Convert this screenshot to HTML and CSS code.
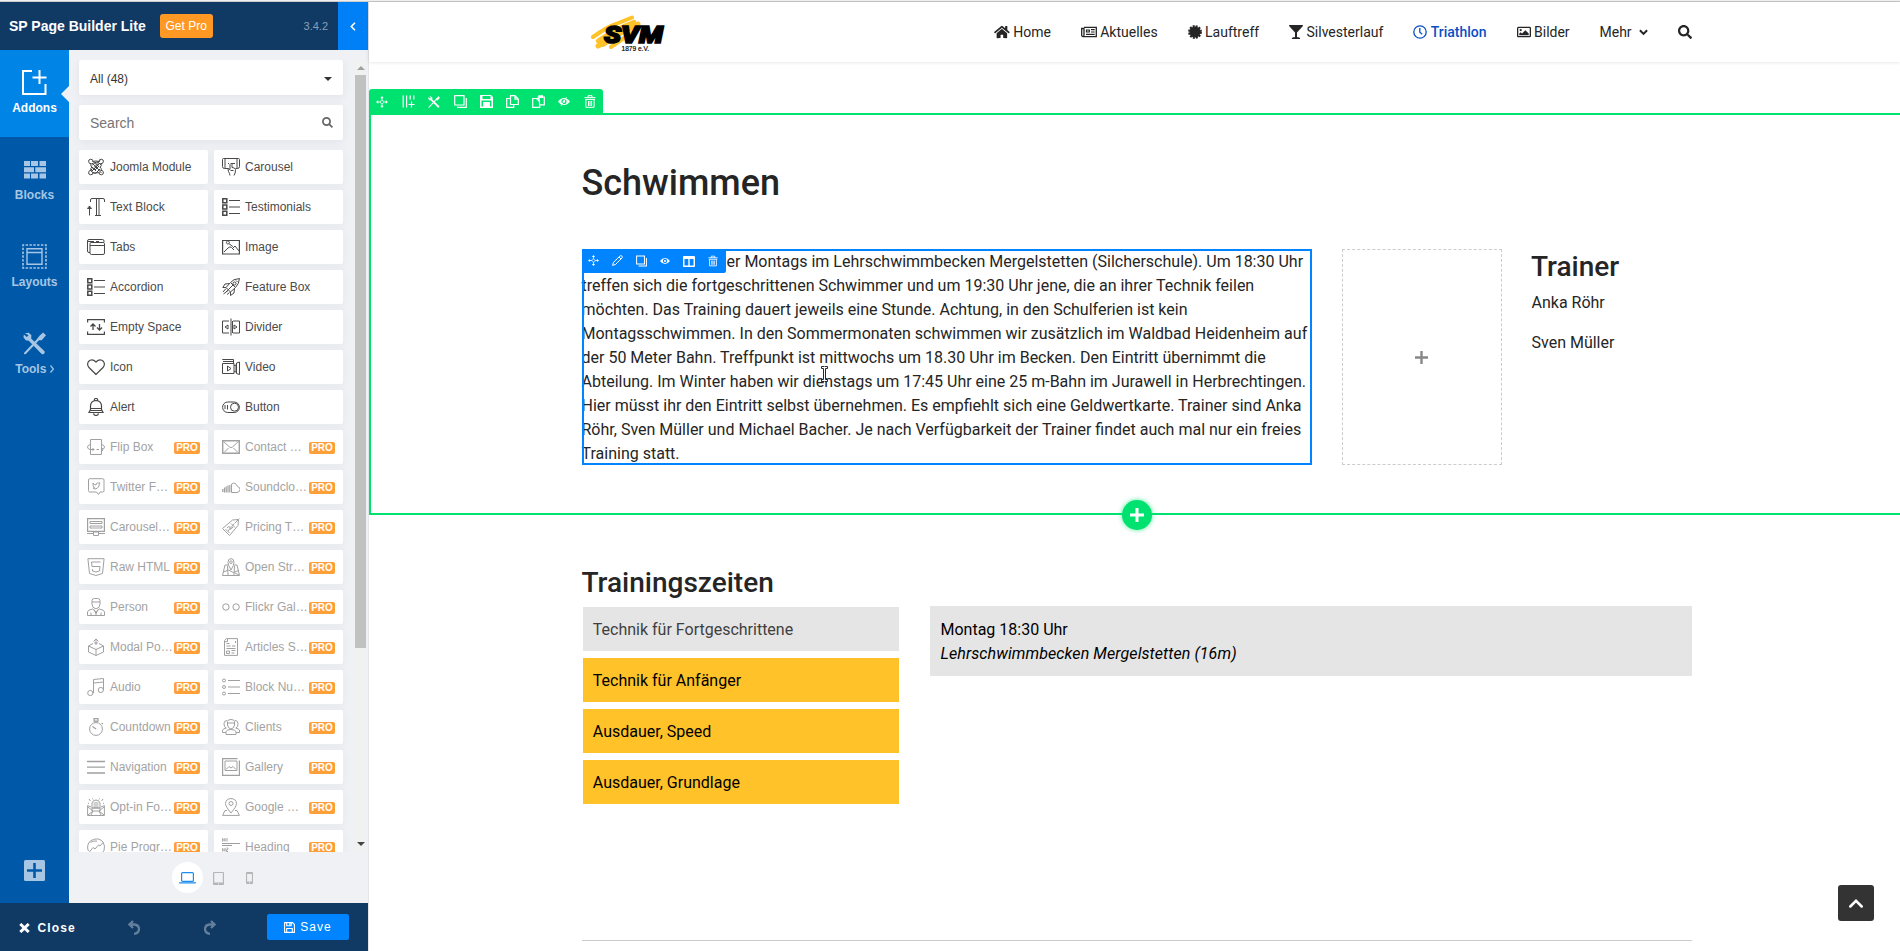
FILE: index.html
```html
<!DOCTYPE html>
<html lang="de">
<head>
<meta charset="utf-8">
<title>SP Page Builder Lite</title>
<link rel="stylesheet" href="styles.css">
</head>
<body>
<svg class="sprite" width="0" height="0">
  <symbol id="joomla" viewBox="0 0 18 18"><path d="M5 7.500 8 4.500Q10 3 12.500 5.500L14 7M5 5l7.500 7.500M10.500 5l2.500-2.500M13 11l-4 4q-1.500 1-3-.5L4 13M5 13l8-8M5.500 10.500 3 13M12 12.500l2.500 2.500M7 3.500 11 7.500M7 9.500l4-4M8 12l4-4M5 9l4 4"/><path d="M4.500 5.500a2.200 2.200 0 1 1 1.500-2l3 3M13.500 5.500a2.200 2.200 0 1 0-1.500-2M4.500 12.500a2.200 2.200 0 1 0 1.500 2M13.500 12.500a2.200 2.200 0 1 1-1.500 2M4 5.500q-1 2 1 4M14 5.500q1 2-1 4M5.500 3.500q3-1 7 0M5.500 14.500q3 1 7 0M4 12.500q-1-2 1-3.500M14 12.500q1-2-1-3.500"/></symbol>
  <symbol id="carousel" viewBox="0 0 18 18"><path d="M6 10.500H2.500Q.5 10.500.5 8.500V1.500Q.5.500 1.500.500h15q1 0 1 1v7q0 2-2 2h-2M3 .500v10M15 .500v10M6 5.500h1M9 5.500h4M8 17.500Q7.500 15 6.500 13.500L6 10.500l2 1V6.500q1-2 2 0v3q3 0 3.500 2 0 4-1.500 6M8.500 12.500h3"/></symbol>
  <symbol id="textblock" viewBox="0 0 18 18"><path d="M3.500 4V2q0-1.500 1.500-1.500h11q1.500 0 1.500 1.500v2M9.500.500V17M12 .500V17M8 17.500h6M2.500 17.500V8M.5 10.500l2-2.500 2 2.500z"/></symbol>
  <symbol id="list" viewBox="0 0 18 18"><path d="M.8.800h4v4h-4zM.8 7h4v4h-4zM.8 13.200h4v4h-4z" stroke-width="1.500"/><path d="M7 2.500h11M7 9h11M7 15.500h11" stroke-width="1.200"/></symbol>
  <symbol id="tabs" viewBox="0 0 18 18"><path d="M3 14.500H2Q.5 14.500.5 13V3Q.5 1.500 2 1.500h13.500q1.500 0 1.500 1.500v1M3 5.500Q3 4.500 4 4.500h12q1.500 0 1.500 1v9.500q0 1.500-1.500 1.500H4.500Q3 16.500 3 15zM3 7.500h14M1 3.500h6M9 3.500h3"/></symbol>
  <symbol id="image" viewBox="0 0 18 18"><path d="M.6 2.500h16.800v13.500H.6z" stroke-width="1.200"/><path d="m2 14 4-4q2-2 3.500-.5L12 12M10.500 10.500l2.500-2.500 4 5M7 5.500a1.500 1.500 0 1 0-.1.100l4 3"/></symbol>
  <symbol id="rocket" viewBox="0 0 18 18"><path d="M17.500.500Q11 1 8.500 4.500L4 9.500l4.500 4.500 5-4.500Q17 6 17.500.500zM7.500 5.500 3 6 .8 9.500 4 9.500M12.500 10.500 12 15l-3.500 2.500V14M11 7l-7 7M9 5l4 4M14 2.500l1.500 1.500M4 10.500 1 14M6 12.500 1.500 16M7.500 14.500 5 16.500"/><circle cx="12.500" cy="5.500" r="1.500"/></symbol>
  <symbol id="space" viewBox="0 0 18 18"><path d="M.6 4.500V1.600h16.800V4.500M.6 13.500v2.900h16.800V13.500" stroke-width="1.200"/><path d="M6 12V6M3.500 8.500 6 6l2.500 2.500M12.500 6v6M10 9.500l2.500 2.500L15 9.500" stroke-width="1.300"/></symbol>
  <symbol id="divider" viewBox="0 0 18 18"><path d="M7 15H.5V3H7M11 3h6.500v12H11M9 .500v17M10.500 3v12M6 7v4L3 9zM12 7v4l3-2z"/></symbol>
  <symbol id="heart" viewBox="0 0 18 18"><path d="M9 16.500 2 9.500Q-.5 6.500 1.500 3.500q3.500-3.500 7.500.5 4-4 7.500-.5Q18.500 6.500 16 9.500z" stroke-width="1.200"/></symbol>
  <symbol id="video" viewBox="0 0 18 18"><path d="M.5 5.500h11.500v10H.5zM1 3.500h10.500M.5 2V1.500h11V5M12 7.500l2-.5v7l-2-.5M14.500 5l3-1v12.500l-3-1zM5.500 8v5l3.500-2.500z"/></symbol>
  <symbol id="bell" viewBox="0 0 18 18"><path d="M2 14.500h14l-1.500-3V8q0-5-5.500-5.500Q3.500 3 3.500 8v3.500zM4 10.500h10M3.500 12.500h11M7.500 2.500Q7 .500 9 .500t1.500 2M6.500 15.500Q7 17.500 9 17.500t2.500-2" stroke-width="1.200"/></symbol>
  <symbol id="toggle" viewBox="0 0 18 18"><rect x=".6" y="4" width="16.800" height="10.500" rx="5.200"/><circle cx="12.500" cy="9.200" r="4"/><path d="M5.500 7v4.500M3 7v4"/></symbol>
  <symbol id="flip" viewBox="0 0 18 18"><path d="M3.500 1.500h11v15h-11zM3 6.500Q.5 7.500.5 9q0 2 2.500 2.500h4M5.500 10 7 11.500 5.500 13M15 6.500q2.500 1 2.500 2.500 0 2-2.500 2.500M9.500 11.500H12M16 10l-1.500 1.500L16 13"/></symbol>
  <symbol id="mail" viewBox="0 0 18 18"><path d="M.7 2.700h16.600v12.600H.7z" stroke-width="1.400"/><path d="m1.500 3.500 6 5.500q1.500 1 3 0l6-5.500M2 14.500l4.500-4.500M16 14.500l-4.500-4.500"/></symbol>
  <symbol id="twitter" viewBox="0 0 18 18"><path d="M2.500.700h13Q17 .700 17 2v11q0 1-1.500 1H13l-1.500 2.500L9.500 14H3q-1.500 0-1.500-1.500V2Q1.500.700 2.500.700z"/><path d="M6 5q1 2 3 2 0-2 1.500-2H13q-1 1-1 3-1.500 3-4 3-1.500 0-2-1h1.500Q5.500 8 6 5z"/></symbol>
  <symbol id="cloud" viewBox="0 0 18 18"><path d="M.8 11v3M2.500 9.500V14.500M4.200 8.500v6M6 7.500v7M7.800 7v7.500" stroke-width="1.200"/><path d="M9.500 14.500V6q4-2.500 6 2.500 2.500.5 2.500 3t-3 3z"/></symbol>
  <symbol id="monitor" viewBox="0 0 18 18"><path d="M.6.600h16.800v12.800H.6zM0 15.500h6M12 15.500h6" stroke-width="1.200"/><path d="M3 3.500h12v2H3zM3 8h12v2H3zM6.500 14h5v3.500h-5z"/></symbol>
  <symbol id="tag" viewBox="0 0 18 18"><path d="M10.500 2 16.500 1.500 16 7.500 7.500 17.500.5 10.500zM12.500 5.500l5-5M5 10q3-3 3 0t3-1M6 13l6-7M9 5.500l4 4M3.500 11l4 4"/></symbol>
  <symbol id="html" viewBox="0 0 18 18"><path d="M.9.700h16.200L15.500 15.500 9 17.500l-6.500-2z"/><path d="M13.500 4h-9l.5 4.500h8l-.5 4.500-3.500 1-3.500-1-.2-2"/></symbol>
  <symbol id="streetmap" viewBox="0 0 18 18"><path d="M6 7H3L.5 17.500h17L15 7h-3M9 12Q6 7 6 4.500 6 .600 9 .600t3 3.900Q12 7 9 12zM1.500 14l5-2 5 2.500 5-2M5.500 8l.5 9M12.500 8l-.5 9M13 15l4 2"/><circle cx="9" cy="4.200" r="1.300"/></symbol>
  <symbol id="person" viewBox="0 0 18 18"><path d="M5 6V2.500Q5 .500 7.500.500h3Q13 .500 13 2.500V6q0 4-4 5-4-1-4-5zM5 4h8M.5 17.500V14q0-2 5-3l3.500 3 3.500-3q5 1 5 3v3.500zM9 14v3.500M4 14.500v3M14 14.500v3M7 11.500l2 4 2-4"/></symbol>
  <symbol id="flickr" viewBox="0 0 18 18"><circle cx="3.900" cy="9" r="3.200"/><circle cx="14.100" cy="9" r="3.200"/></symbol>
  <symbol id="modal" viewBox="0 0 18 18"><path d="M6 5.500 1.500 8v6L9 17.500l7.500-3.500V8L12 5.500M1.500 8 9 11.500 16.500 8M9 11.500v6M9 7V.800M6.500 3.500 9 1l2.500 2.500M7 5h4"/></symbol>
  <symbol id="article" viewBox="0 0 18 18"><path d="M4.500.600H15.500v16.800H2.500V2.500zM5.500.600v3h-3M4.500 5.500h3M4.500 8h4M10 8h3.500M4.500 10.500h9M4.500 13h3v2.500h-3zM9.500 12.500h4M9.500 15h3M13.500 3v2"/></symbol>
  <symbol id="audio" viewBox="0 0 18 18"><circle cx="3.300" cy="15" r="2.600"/><circle cx="13.800" cy="12" r="2.600"/><path d="M6.500 15V1.500l10-1V12M6.500 5l10-1"/></symbol>
  <symbol id="dots" viewBox="0 0 18 18"><circle cx="2" cy="2.500" r="1.500"/><circle cx="2" cy="9" r="1.500"/><circle cx="2" cy="15.500" r="1.500"/><path d="M6 2.500h12M6 9h12M6 15.500h12" stroke-width="1.200"/></symbol>
  <symbol id="timer" viewBox="0 0 18 18"><circle cx="9" cy="11" r="6.400"/><path d="M7 .600h4v2.500H7zM8 3v1.500M10 3v1.500M14.500 5l1.500 1M9 11 5.500 8.500" stroke-width="1.200"/></symbol>
  <symbol id="clients" viewBox="0 0 18 18"><path d="M5.500 7V3.500q0-2 3.500-2t3.500 2V7Q12 10.500 9 11q-3-.5-3.500-4zM5.500 5h7M5 2.500Q2 2.500 2 5.500q0 4 2 4.500M13 2.500q3 0 3 3 0 4-2 4.500M.5 14.500V12q1-1.500 4-2M17.500 14.500V12q-1-1.500-4-2M4 16.500v-3q1-2 5-2t5 2v3zM.5 14.500H4M14 14.500h3.500"/></symbol>
  <symbol id="menu" viewBox="0 0 18 18"><path d="M0 3.500h18M0 9.200h18M0 15h18" stroke-width="1.300"/></symbol>
  <symbol id="gallery" viewBox="0 0 18 18"><path d="M15.500.600H.6v16.800h16.800V2.500" stroke-width="1.200"/><path d="M3 3h12v9.500H3zM4 11.500l3-3 2 1.500 2-1.500 3 3"/></symbol>
  <symbol id="optin" viewBox="0 0 18 18"><path d="M5 8V5q1-3 4-3t4 3v5H5zM6.500 5h5M6.500 7h5M6.500 9h5M4 9 .6 7.500v10h16.800v-10L14 9M1 9l5 4-5 4M17 9l-5 4 5 4M5 10h8v3H5zM6 13l-2 4M12 13l2 4M3.500 3 2 1M6 1.500 5.500.500M14.500 3 16 1M12 1.500l.5-1M2 5.500l-1-.5M16 5.500l1-.5"/></symbol>
  <symbol id="pin" viewBox="0 0 18 18"><path d="M9 15Q3.500 8.500 3.500 5.500 4 .600 9 .600t5.500 4.900Q14.500 8.500 9 15zM5 12.500H3L.6 17.400h16.800L15 12.500h-2"/><circle cx="9" cy="5.500" r="2"/></symbol>
  <symbol id="pie" viewBox="0 0 18 18"><path d="M1.500 13Q.5 11 .6 9 1 3 6.500 1.500 12-.500 16 4q2.500 4 1 8.500-1.500 4-6 5M2 14.500l4-5 2 1.500 3.500-4 1.500 1 3-3.500M3.500 4.500Q6 2.500 10 3"/></symbol>
  <symbol id="heading" viewBox="0 0 18 18"><path d="M.7 0v3.500M3 0v3.500M.7 2H3M5 0v3.500M.7 10v3.500M3 10v3.500M.7 12H3M4.500 10h1.300v1.700H4.500v1.800H6M0 5.500h18M0 7.500h10" stroke-width="1"/></symbol>
  <symbol id="wrench" viewBox="0 0 24 24"><path d="M2 1.200 6 .800 8.800 3.500 8.500 6.800 22.500 20q.8 2-1 3-1.500.8-2.500-.5L6 9 2.800 8.500.5 5.500l.4-2.800L4 5.200 5.800 3.500zM17.200 3.800 21 .500l3 3-4.500 5-2.800.2L3 23l-1.800.3L1 22 14 8z"/></symbol>
  <symbol id="move" viewBox="0 0 14 14"><path d="M7 0 9 2.600H5zM7 14l2-2.600H5zM0 7l2.600-2v4zM14 7l-2.600-2v4z"/><path d="M7 2v3M7 9v3M2 7h3M9 7h3" stroke="currentColor"/><circle cx="7" cy="7" r="1.900" fill="none" stroke="currentColor" stroke-width=".8"/></symbol>
  <symbol id="copy" viewBox="0 0 13 13"><path d="M.7.700h9.300v9.300H.7zM3 12.400h9.300V3" fill="none" stroke="currentColor" stroke-width="1.200"/></symbol>
  <symbol id="trash" viewBox="0 0 12 13"><path d="M.5 2.600h11M4 2.500V.700h4v1.800M1.900 4.500v7.800h8.200V4.500M1 4.400h10M4.500 6v5M6 6v5M7.600 6v5" fill="none" stroke="currentColor" stroke-width="1"/></symbol>
  <symbol id="eye" viewBox="0 0 14 10"><path fill-rule="evenodd" d="M0 5Q3 .800 7 .800T14 5Q11 9.200 7 9.200T0 5zm4 0a3 3 0 1 0 6 0 3 3 0 1 0-6 0zm1.500 0a1.500 1.500 0 1 0 3 0 1.500 1.500 0 1 0-3 0z"/></symbol>
</svg>

<div class="app">
  <aside class="builder">
    <header class="builder-head">
      <strong class="brand">SP Page Builder Lite</strong>
      <span class="get-pro">Get Pro</span>
      <span class="version">3.4.2</span>
      <span class="collapse"><svg width="6" height="9" viewBox="0 0 6 9"><path d="M5 .800 1.300 4.500 5 8.200" fill="none" stroke="#fff" stroke-width="1.600"/></svg></span>
    </header>

    <div class="builder-body">
      <nav class="rail">
        <a class="rail-tab active"><span class="rail-icon"><svg width="25" height="25" viewBox="0 0 25 25"><path d="M10 1H1v23h22.500V14M17.500 0v14M10.500 7.500h14" fill="none" stroke="currentColor" stroke-width="2"/></svg></span>Addons</a>
        <a class="rail-tab"><span class="rail-icon"><svg width="22" height="18" viewBox="0 0 22 18" fill="currentColor"><path d="M0 0h6v5H0zM7 0h7v5H7zM15.500 0H22v5h-6.500zM0 6.300h10v5H0zM11.300 6.300H22v5H11.300zM0 12.600h6v5H0zM7 12.600h7v5H7zM15.500 12.600H22v5h-6.500z"/></svg></span>Blocks</a>
        <a class="rail-tab"><span class="rail-icon"><svg width="25" height="25" viewBox="0 0 25 25" fill="none" stroke="currentColor"><path d="M1 1h23v23H1z" stroke-width="1.600" stroke-dasharray="2.400 1.430" stroke-dashoffset="1.200"/><path d="M5 4.700h15v15.600H5zM5 8.500h15" stroke-width="1.400"/></svg></span>Layouts</a>
        <a class="rail-tab"><span class="rail-icon"><svg width="23" height="23" fill="currentColor"><use href="#wrench"/></svg></span><span>Tools <svg width="4" height="8" viewBox="0 0 4 8"><path d="M.5.500 3.400 4 .5 7.500" fill="none" stroke="currentColor" stroke-width="1.200"/></svg></span></a>
        <svg class="rail-add" width="21" height="21" viewBox="0 0 21 21"><rect width="21" height="21" rx="1.500" fill="currentColor"/><path d="M10.500 3v15M3 10.500h15" stroke="#0059a8" stroke-width="2.600"/></svg>
      </nav>

      <div class="panel">
        <div class="panel-scroll">
          <div class="panel-content">
            <div class="field filter">All (48)<svg width="8" height="4"><path d="M0 0h8L4 4z" fill="#333"/></svg></div>
            <div class="field search">Search<svg width="11" height="11" viewBox="0 0 11 11" fill="none" stroke="#666" stroke-width="1.700"><circle cx="4.500" cy="4.500" r="3.600"/><path d="m7.200 7.200 3.200 3.200"/></svg></div>
            <div class="addons">
              <div class="addon"><svg><use href="#joomla"/></svg><span>Joomla Module</span></div>
              <div class="addon"><svg><use href="#carousel"/></svg><span>Carousel</span></div>
              <div class="addon"><svg><use href="#textblock"/></svg><span>Text Block</span></div>
              <div class="addon"><svg><use href="#list"/></svg><span>Testimonials</span></div>
              <div class="addon"><svg><use href="#tabs"/></svg><span>Tabs</span></div>
              <div class="addon"><svg><use href="#image"/></svg><span>Image</span></div>
              <div class="addon"><svg><use href="#list"/></svg><span>Accordion</span></div>
              <div class="addon"><svg><use href="#rocket"/></svg><span>Feature Box</span></div>
              <div class="addon"><svg><use href="#space"/></svg><span>Empty Space</span></div>
              <div class="addon"><svg><use href="#divider"/></svg><span>Divider</span></div>
              <div class="addon"><svg><use href="#heart"/></svg><span>Icon</span></div>
              <div class="addon"><svg><use href="#video"/></svg><span>Video</span></div>
              <div class="addon"><svg><use href="#bell"/></svg><span>Alert</span></div>
              <div class="addon"><svg><use href="#toggle"/></svg><span>Button</span></div>
              <div class="addon locked"><svg><use href="#flip"/></svg><span>Flip Box</span><b>PRO</b></div>
              <div class="addon locked"><svg><use href="#mail"/></svg><span>Contact …</span><b>PRO</b></div>
              <div class="addon locked"><svg><use href="#twitter"/></svg><span>Twitter F…</span><b>PRO</b></div>
              <div class="addon locked"><svg><use href="#cloud"/></svg><span>Soundclo…</span><b>PRO</b></div>
              <div class="addon locked"><svg><use href="#monitor"/></svg><span>Carousel…</span><b>PRO</b></div>
              <div class="addon locked"><svg><use href="#tag"/></svg><span>Pricing T…</span><b>PRO</b></div>
              <div class="addon locked"><svg><use href="#html"/></svg><span>Raw HTML</span><b>PRO</b></div>
              <div class="addon locked"><svg><use href="#streetmap"/></svg><span>Open Str…</span><b>PRO</b></div>
              <div class="addon locked"><svg><use href="#person"/></svg><span>Person</span><b>PRO</b></div>
              <div class="addon locked"><svg><use href="#flickr"/></svg><span>Flickr Gal…</span><b>PRO</b></div>
              <div class="addon locked"><svg><use href="#modal"/></svg><span>Modal Po…</span><b>PRO</b></div>
              <div class="addon locked"><svg><use href="#article"/></svg><span>Articles S…</span><b>PRO</b></div>
              <div class="addon locked"><svg><use href="#audio"/></svg><span>Audio</span><b>PRO</b></div>
              <div class="addon locked"><svg><use href="#dots"/></svg><span>Block Nu…</span><b>PRO</b></div>
              <div class="addon locked"><svg><use href="#timer"/></svg><span>Countdown</span><b>PRO</b></div>
              <div class="addon locked"><svg><use href="#clients"/></svg><span>Clients</span><b>PRO</b></div>
              <div class="addon locked"><svg><use href="#menu"/></svg><span>Navigation</span><b>PRO</b></div>
              <div class="addon locked"><svg><use href="#gallery"/></svg><span>Gallery</span><b>PRO</b></div>
              <div class="addon locked"><svg><use href="#optin"/></svg><span>Opt-in Fo…</span><b>PRO</b></div>
              <div class="addon locked"><svg><use href="#pin"/></svg><span>Google …</span><b>PRO</b></div>
              <div class="addon locked"><svg><use href="#pie"/></svg><span>Pie Progr…</span><b>PRO</b></div>
              <div class="addon locked"><svg><use href="#heading"/></svg><span>Heading</span><b>PRO</b></div>
            </div>
          </div>
          <div class="scrollbar">
            <svg width="8" height="4"><path d="M0 4h8L4 0z" fill="#a0a0a0"/></svg>
            <div class="thumb"></div>
            <svg class="down" width="8" height="4"><path d="M0 0h8L4 4z" fill="#444"/></svg>
          </div>
        </div>
        <div class="devices">
          <span class="device on"><svg width="17" height="12" viewBox="0 0 17 12"><rect x="2.600" y=".600" width="11.800" height="8.800" rx="1" fill="none" stroke="currentColor" stroke-width="1.200"/><path d="M0 10.200h17v.8q0 .6-1 .6H1q-1 0-1-.6z" fill="currentColor"/></svg></span>
          <span class="device"><svg width="11" height="13" viewBox="0 0 11 13"><path fill-rule="evenodd" d="M1 0h9q1 0 1 1v11q0 1-1 1H1q-1 0-1-1V1q0-1 1-1zm.2 1v9.500h8.600V1zM5 11.300v1h1v-1z" fill="currentColor"/></svg></span>
          <span class="device"><svg width="7" height="12" viewBox="0 0 7 12"><path fill-rule="evenodd" d="M1 0h5q1 0 1 1v10q0 1-1 1H1q-1 0-1-1V1q0-1 1-1zm.1 2v7.500h4.800V2zM3 10.200v1h1v-1z" fill="currentColor"/></svg></span>
        </div>
      </div>
    </div>

    <footer class="builder-foot">
      <span class="close"><svg width="11" height="10" viewBox="0 0 11 10"><path d="m1.300 1 8.400 8M9.700 1 1.300 9" stroke="#fff" stroke-width="3"/></svg>Close</span>
      <svg class="undo" width="12" height="15" viewBox="0 0 12 15"><path d="M5 1 1.500 4.500 5 8M1.500 4.500h5Q11 5 11 9.500 10.500 13.500 6 13.800" fill="none" stroke="currentColor" stroke-width="2.300"/></svg>
      <svg class="redo" width="12" height="15" viewBox="0 0 12 15"><path d="m7 1 3.500 3.500L7 8M10.500 4.500h-5Q1 5 1 9.500 1.500 13.500 6 13.800" fill="none" stroke="currentColor" stroke-width="2.300"/></svg>
      <span class="save"><svg width="11" height="11" viewBox="0 0 11 11" fill="none" stroke="#fff" stroke-width="1.100"><path d="M.6.600h7.900l1.900 1.900v7.900H.6zM2.700.600v3.200h4.500V.600M2.700 10.400V6.500h5.600v3.900M5.800 1v2"/></svg>Save</span>
    </footer>
  </aside>

  <main class="site">
    <header class="site-head">
      <div class="container head-inner">
        <svg class="logo" width="76" height="38" viewBox="0 0 76 38">
          <g fill="none" stroke="#ffc229" stroke-linecap="round" stroke-linejoin="round">
            <path d="M2 22Q16 12 25 9L41 2.500" stroke-width="4"/>
            <path d="M7 26 24 15l19-8" stroke-width="4.500"/>
            <path d="M7 31 22 22l25-13" stroke-width="5"/>
            <path d="M12 30 26 21l8-9M20 32l13-9 12-8" stroke-width="4"/>
          </g>
          <text class="logo-main" x="13" y="28" textLength="59" lengthAdjust="spacingAndGlyphs">SVM</text>
          <text class="logo-sub" x="30.500" y="36" textLength="27.500" lengthAdjust="spacingAndGlyphs">1879 e.V.</text>
        </svg>
        <nav class="menu">
          <a><svg width="15.750" height="14" viewBox="0 0 576 512"><path d="M280.370 148.260L96 300.110V464a16 16 0 0 0 16 16l112.060-.29a16 16 0 0 0 15.920-16V368a16 16 0 0 1 16-16h64a16 16 0 0 1 16 16v95.640a16 16 0 0 0 16 16.050L464 480a16 16 0 0 0 16-16V300L295.670 148.260a12.190 12.190 0 0 0-15.300 0zM571.600 251.470L488 182.560V44.050a12 12 0 0 0-12-12h-56a12 12 0 0 0-12 12v72.610L318.470 43a48 48 0 0 0-61 0L4.340 251.470a12 12 0 0 0-1.600 16.900l25.500 31A12 12 0 0 0 45.150 301l235.220-193.740a12.190 12.190 0 0 1 15.300 0L530.900 301a12 12 0 0 0 16.900-1.600l25.500-31a12 12 0 0 0-1.700-16.930z"/></svg>Home</a>
          <a><svg width="16" height="14" viewBox="0 0 16 14" fill="none" stroke="currentColor"><path d="M3 2.400h12.300v9.200H2Q.7 11.600.7 10V3.500H3V10q0 1.600-1.300 1.600" stroke-width="1.300"/><path d="M5.500 5h2.800v2H5.500zM10 4.700h3.700M10 7h3.700M5 9.400h8.700" stroke-width="1.200"/></svg>Aktuelles</a>
          <a><svg width="14" height="14" viewBox="0 0 14 14"><circle cx="7" cy="7" r="5.600"/><circle cx="7" cy="7" r="5.700" fill="none" stroke="currentColor" stroke-width="2.400" stroke-dasharray="1.900 1.084"/></svg>Lauftreff</a>
          <a><svg width="14" height="14" viewBox="0 0 14 14"><path d="M.5 0h13q.8.600.2 1.300L8 7.500v4.800h1.800q1.200.2 1.400 1.700H2.800q.2-1.500 1.400-1.700H6V7.500L.3 1.300Q-.3.600.5 0z"/></svg>Silvesterlauf</a>
          <a class="current"><svg width="14" height="14" viewBox="0 0 14 14" fill="none" stroke="currentColor"><circle cx="7" cy="7" r="6.200" stroke-width="1.300"/><path d="M6.800 3v4.300l2.400 1.900" stroke-width="1.300"/></svg>Triathlon</a>
          <a><svg width="14" height="14" viewBox="0 0 14 14"><rect x=".650" y="2.400" width="12.700" height="9.300" rx=".8" fill="none" stroke="currentColor" stroke-width="1.300"/><circle cx="3.700" cy="5.100" r="1.100"/><path d="M2.300 10.200V8.600l1.400-1.300L5 8.500l3.400-3.300 3.300 3.200v1.800z"/></svg>Bilder</a>
          <a>Mehr<svg class="caret" width="9" height="7" viewBox="0 0 9 7"><path d="m.9 1.300 3.600 3.600 3.600-3.600" fill="none" stroke="currentColor" stroke-width="2"/></svg></a>
          <a><svg class="lens" width="14" height="14" viewBox="0 0 512 512"><path d="M505 442.700L405.300 343c-4.500-4.500-10.600-7-17-7H372c27.600-35.300 44-79.700 44-128C416 93.100 322.900 0 208 0S0 93.100 0 208s93.100 208 208 208c48.300 0 92.700-16.400 128-44v16.300c0 6.400 2.500 12.500 7 17l99.700 99.700c9.400 9.400 24.600 9.400 33.900 0l28.300-28.300c9.400-9.400 9.400-24.600.1-34zM208 336c-70.700 0-128-57.200-128-128 0-70.700 57.200-128 128-128 70.700 0 128 57.200 128 128 0 70.700-57.200 128-128 128z"/></svg></a>
        </nav>
      </div>
    </header>

    <section class="edit-row">
      <div class="row-tools">
        <span><svg width="12" height="12"><use href="#move"/></svg></span>
        <span><svg width="13" height="13" viewBox="0 0 13 13"><path d="M1.200.500v12M4.600.500v12M8.200.500v4M11.800.500v4M6.500 9.500h6M9.500 6.500v6" fill="none" stroke="currentColor" stroke-width="1.200"/></svg></span>
        <span><svg width="12" height="12"><use href="#wrench"/></svg></span>
        <span><svg width="13" height="13"><use href="#copy"/></svg></span>
        <span><svg width="13" height="13" viewBox="0 0 13 13"><path fill-rule="evenodd" d="M2 0h9l2 2v11H0V0zm.5 1v3h8V1zM1.500 5.500v6h10v-6zM3 7h7v5H3z"/><path d="M3.500 7.500h6v4h-6z" fill="none" stroke="currentColor"/></svg></span>
        <span><svg width="13" height="13" viewBox="0 0 13 13" fill="none" stroke="currentColor" stroke-width="1.200"><path d="M4.500.700H9l3.300 3.300v5.500H4.500zM9 1v3.200h3M4.500 3.500H.7v8.800h7V9.500"/></svg></span>
        <span><svg width="13" height="13" viewBox="0 0 13 13" fill="none" stroke="currentColor" stroke-width="1.200"><path d="M4.500 3.500H.7v8.800h7V9.800M4.500 3.500 7.500 6.500V9.800h4.800V2H5.500M7 .800h3.500v1.500H7zM4.500 3.500h2.700v3"/></svg></span>
        <span><svg width="12" height="9" viewBox="0 0 14 10"><use href="#eye"/><path d="M3.500 10 10 0" stroke="currentColor"/></svg></span>
        <span><svg width="12" height="13"><use href="#trash"/></svg></span>
      </div>
      <div class="container">
        <h2>Schwimmen</h2>
        <div class="swim-cols">
          <div class="text-addon">
            <p><span class="covered"></span>er Montags im Lehrschwimmbecken Mergelstetten (Silcherschule). Um 18:30 Uhr<br>treffen sich die fortgeschrittenen Schwimmer und um 19:30 Uhr jene, die an ihrer Technik feilen<br>möchten. Das Training dauert jeweils eine Stunde. Achtung, in den Schulferien ist kein<br>Montagsschwimmen. In den Sommermonaten schwimmen wir zusätzlich im Waldbad Heidenheim auf<br>der 50 Meter Bahn. Treffpunkt ist mittwochs um 18.30 Uhr im Becken. Den Eintritt übernimmt die<br>Abteilung. Im Winter haben wir dienstags um 17:45 Uhr eine 25 m-Bahn im Jurawell in Herbrechtingen.<br>Hier müsst ihr den Eintritt selbst übernehmen. Es empfiehlt sich eine Geldwertkarte. Trainer sind Anka<br>Röhr, Sven Müller und Michael Bacher. Je nach Verfügbarkeit der Trainer findet auch mal nur ein freies<br>Training statt.</p>
            <div class="outline"></div>
            <div class="addon-tools">
              <span><svg width="11" height="11"><use href="#move"/></svg></span>
              <span><svg width="11" height="11" viewBox="0 0 11 11" fill="none" stroke="currentColor"><path d="m.6 10.400.8-3L8.200.800q1-.5 1.700.3.800.8.200 1.700L3.500 9.500zM7 2l2 2"/></svg></span>
              <span><svg width="11" height="12"><use href="#copy"/></svg></span>
              <span><svg width="10" height="8"><use href="#eye"/></svg></span>
              <span><svg class="cols-icon" width="12" height="11" viewBox="0 0 12 11"><path fill-rule="evenodd" d="M1 0h10q1 0 1 1v9q0 1-1 1H1q-1 0-1-1V1q0-1 1-1zm.5 3v6.500H5.300V3zm5.200 0v6.500h3.800V3z"/></svg></span>
              <span><svg width="10" height="12"><use href="#trash"/></svg></span>
            </div>
            <svg class="cursor" width="7" height="16" viewBox="0 0 7 16"><path d="M.5.500h2.500l.5.500.5-.5h2.500v2H4.500v11h2v2H4l-.5-.5-.5.500H.5v-2h2v-11h-2z" fill="#fff" stroke="#111" stroke-width=".9"/></svg>
          </div>
          <div class="drop"><svg width="13" height="13" viewBox="0 0 13 13"><path d="M6.500 0v13M0 6.500h13" stroke="#888" stroke-width="2.400"/></svg></div>
          <div class="trainer">
            <h3>Trainer</h3>
            <p>Anka Röhr</p>
            <p>Sven Müller</p>
          </div>
        </div>
      </div>
      <span class="add-row"><svg width="14" height="14" viewBox="0 0 14 14"><path d="M7 0v14M0 7h14" stroke="#fff" stroke-width="3"/></svg></span>
    </section>

    <section class="times container">
      <h3>Trainingszeiten</h3>
      <div class="times-cols">
        <ul class="time-tabs">
          <li class="selected">Technik für Fortgeschrittene</li>
          <li>Technik für Anfänger</li>
          <li>Ausdauer, Speed</li>
          <li>Ausdauer, Grundlage</li>
        </ul>
        <div class="time-detail">Montag 18:30 Uhr<br><em>Lehrschwimmbecken Mergelstetten (16m)</em></div>
      </div>
      <hr>
    </section>
    <span class="to-top"><svg width="14" height="9" viewBox="0 0 14 9"><path d="m1.300 7.500 5.700-5.700 5.700 5.700" fill="none" stroke="#fff" stroke-width="2.500" stroke-linecap="round"/></svg></span>
  </main>
</div>
</body>
</html>
```
FILE: styles.css
```css
* { box-sizing: border-box; }
body { margin: 0; width: 1900px; height: 951px; overflow: hidden; background: #fff; border-top: 1px solid #efefef; }
h2, h3, p, ul { margin: 0; padding: 0; }
svg { display: block; flex: none; }
.sprite { position: absolute; }
.app { display: flex; height: 950px; border-top: 1px solid #ccc; }

/* builder sidebar */
.builder { width: 369px; height: 949px; flex: none; display: flex; flex-direction: column; border-right: 1px solid #e3e5e8; font: 12px/18px "Liberation Sans", Arial, sans-serif; }
.builder-head { height: 48px; flex: none; display: flex; align-items: center; background: #103964; color: #fff; padding-left: 9px; }
.brand { font-size: 14px; }
.get-pro { margin-left: 14px; width: 53px; height: 24px; line-height: 24px; text-align: center; background: #ff9923; border-radius: 3px; }
.version { margin-left: auto; margin-right: 10px; font-size: 11px; color: #8aa0b6; }
.collapse { width: 30px; height: 48px; background: #0080f7; display: flex; align-items: center; justify-content: center; }
.builder-body { flex: 1; min-height: 0; display: flex; }

.rail { width: 69px; flex: none; display: flex; flex-direction: column; background: #0059a8; color: #a6c6e4; padding-bottom: 22px; }
.rail-tab { position: relative; height: 87px; display: flex; flex-direction: column; align-items: center; font-weight: bold; padding-top: 20px; }
.rail-tab.active { background: #0084e6; color: #fff; }
.rail-tab.active::after { content: ""; position: absolute; right: 0; top: 36px; border: 8px solid transparent; border-left: 0; border-right-color: #eff1f5; }
.rail-icon { height: 25px; margin-bottom: 4px; display: flex; align-items: center; }
.rail-tab span svg { display: inline-block; }
.rail-add { margin: auto auto 0 24px; }

.panel { flex: 1; background: #eff1f5; display: flex; flex-direction: column; padding-top: 10px; }
.panel-scroll { height: 792px; display: flex; justify-content: space-between; padding: 0 2px 0 10px; overflow: hidden; }
.panel-content { width: 264px; }
.field { height: 35px; margin-bottom: 10px; padding: 0 11px; display: flex; align-items: center; justify-content: space-between; background: #fff; border-radius: 2px; color: #333; box-shadow: 0 2px 8px rgba(60, 80, 90, .08); }
.field.filter { padding-top: 2px; }
.field.search { font-size: 14px; color: #757575; padding-right: 10px; }
.addons { display: grid; grid-template-columns: 129px 129px; gap: 6px; }
.addon { height: 34px; padding: 0 8px; display: flex; align-items: center; background: #fff; border-radius: 2px; color: #4b4b4b; box-shadow: 0 2px 10px rgba(60, 80, 90, .06); white-space: nowrap; }
.addon svg { width: 18px; height: 18px; margin-right: 5px; fill: none; stroke: #484848; stroke-width: 1; }
.addon b { margin-left: auto; width: 26px; height: 12px; margin-top: 1px; font-size: 10px; line-height: 12px; text-align: center; color: #fff; background: #ff9f38; border-radius: 2px; }
.addon span { width: 62px; }
.locked { color: #a3a3a3; }
.locked svg { stroke: #a0a0a0; }

.scrollbar { width: 11px; background: #f1f1f1; display: flex; flex-direction: column; align-items: center; padding-top: 6px; }
.scrollbar .thumb { width: 11px; height: 573px; margin-top: 5px; background: #c1c1c1; }
.scrollbar .down { margin-top: auto; margin-bottom: 6px; }
.devices { flex: 1; display: flex; align-items: flex-start; padding: 10px 0 0 103px; }
.device { width: 31px; height: 31px; display: flex; align-items: center; justify-content: center; color: #b5b5b5; }
.device.on { background: #fff; border-radius: 50%; color: #1b8ded; }
.device svg { margin-top: 1px; }

.builder-foot { height: 48px; flex: none; display: flex; align-items: center; background: #103964; color: #fff; padding: 0 19px; letter-spacing: 1px; }
.close { width: 109px; display: flex; align-items: center; gap: 7.500px; font-weight: bold; letter-spacing: 1.150px; padding-top: 1px; }
.undo, .redo { color: #627f9b; margin-top: 1px; }
.redo { margin-left: 64px; }
.save { margin-left: auto; width: 82px; height: 26px; display: flex; align-items: center; justify-content: center; gap: 5px; background: #0084ff; border-radius: 2px; }

/* edited site */
.site { position: relative; flex: 1; font: 16px/24px Roboto, sans-serif; color: #252525; }
.container { width: 1110px; margin-left: 213px; }
.site-head { height: 60px; box-shadow: 0 0 4px rgba(0, 0, 0, .14); }
.head-inner { height: 60px; display: flex; align-items: center; justify-content: space-between; padding-left: 9px; }
.logo { margin-top: 3px; }
.logo-main { font: italic 900 23px Roboto, sans-serif; fill: #000; stroke: #000; stroke-width: 1.600px; }
.logo-sub { font: 8px "Liberation Sans", Arial, sans-serif; fill: #000; stroke: #000; stroke-width: .2px; }
.menu { display: flex; gap: 29.900px; font-size: 14px; }
.menu a { display: flex; align-items: center; gap: 3.500px; }
.menu svg { fill: currentColor; }
.menu svg[fill="none"] { fill: none; }
.menu .current { color: #0a4fc4; font-weight: 500; }
.menu .caret { margin-left: 4px; fill: none; }

.edit-row { position: relative; margin-top: 51px; height: 402px; border: 2px solid #00e26f; border-right: 0; padding-top: 46px; }
.edit-row .container { margin-left: 211px; }
.row-tools { position: absolute; left: -2px; top: -26px; display: flex; background: #00e26f; border-radius: 3px 3px 0 0; color: #fff; }
.row-tools span { width: 26px; height: 26px; padding-bottom: 1px; display: flex; align-items: center; justify-content: center; }
.row-tools svg, .addon-tools svg { fill: currentColor; }
.row-tools svg[fill="none"], .addon-tools svg[fill="none"] { fill: none; }
h2 { font-size: 36px; line-height: 44px; font-weight: 500; margin: 0 0 44px -.5px; }
h3 { font-size: 28px; line-height: 36px; font-weight: 500; margin-left: -.5px; }
.swim-cols { display: grid; grid-template-columns: 730px 160px 160px; grid-template-rows: 216px; gap: 30px; height: 216px; }
.text-addon { position: relative; height: 216px; white-space: nowrap; }
.text-addon p { padding-top: 1px; margin-left: -.5px; }
.covered { display: inline-block; width: 145px; }
.outline { position: absolute; inset: 0; border: 2px solid #0084ff; }
.addon-tools { position: absolute; left: 0; top: 0; display: flex; background: #0084ff; color: #fff; border-radius: 0 0 2px 0; }
.addon-tools span { width: 24px; height: 24px; padding: 0 1.500px 1px 0; display: flex; align-items: center; justify-content: center; }
.addon-tools .cols-icon { margin-top: 2px; }
.cursor { position: absolute; left: 239px; top: 117px; }
.drop { border: 1px dashed #ccc; display: flex; align-items: center; justify-content: center; padding-right: 1px; }
.trainer { margin-left: -.5px; }
.trainer h3 { margin-bottom: 6px; }
.trainer p { margin-bottom: 16px; }
.add-row { position: absolute; left: 751px; bottom: -17px; width: 30px; height: 30px; border-radius: 50%; background: #00e26f; box-shadow: 0 0 5px rgba(0, 226, 111, .7); display: flex; align-items: center; justify-content: center; }

.times { padding-top: 50px; }
.times-cols { display: grid; grid-template-columns: 317px 762px; justify-content: space-between; align-items: start; margin-top: 5px; height: 334px; }
.time-tabs { list-style: none; margin: 1px 0 0 1px; display: grid; gap: 7px; }
.time-tabs li { height: 44px; padding: 11px 9.800px 9px; background: #ffc229; color: #000; }
.time-tabs .selected { background: #e5e5e5; color: #3f3f3f; }
.time-detail { height: 70px; padding: 12px 10.500px 10px; background: #e5e5e5; color: #000; }
.time-detail em { letter-spacing: .09px; }
hr { margin: 0; border: 0; height: 1px; background: #ccc; }
.to-top { position: absolute; right: 26px; top: 883px; width: 36px; height: 36px; border-radius: 3px; background: #333; display: flex; align-items: center; justify-content: center; }
```
